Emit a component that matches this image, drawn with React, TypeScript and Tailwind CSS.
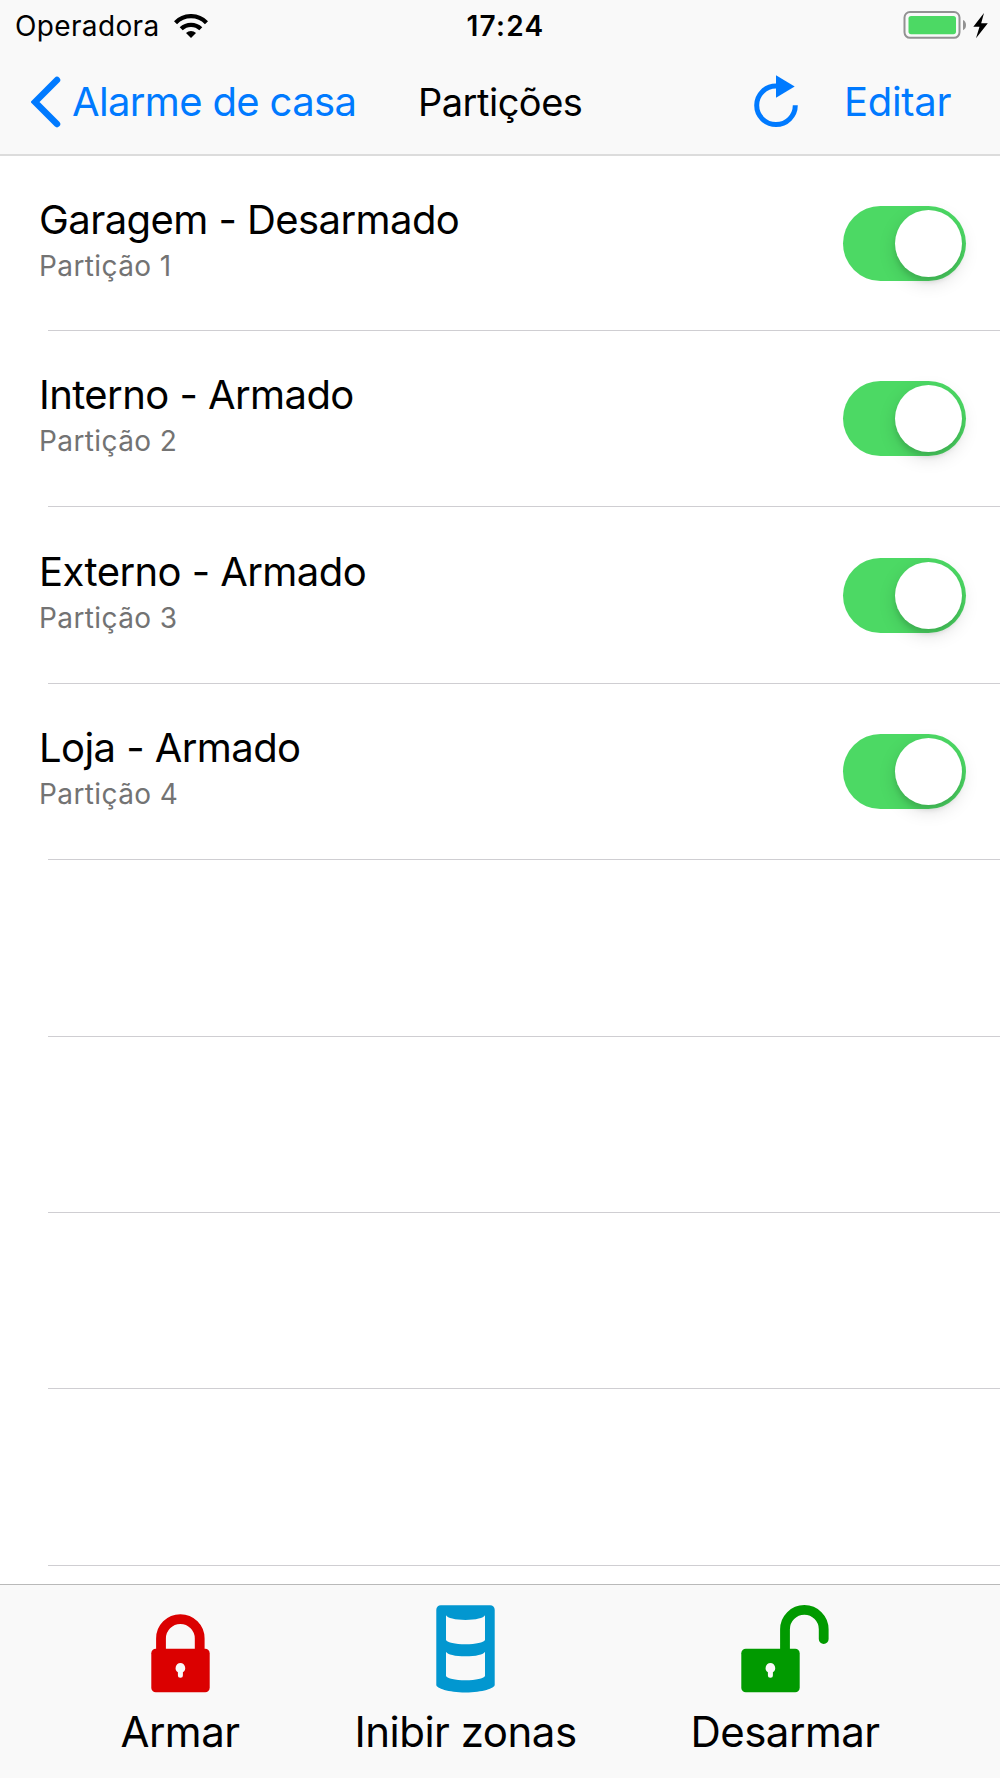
interface Partition {
  id: number;
  name: string;
  status: string;
}

const partitions: Partition[] = [
  { id: 1, name: "Garagem", status: "Desarmado" },
  { id: 2, name: "Interno", status: "Armado" },
  { id: 3, name: "Externo", status: "Armado" },
  { id: 4, name: "Loja", status: "Armado" },
];

function WifiIcon() {
  return (
    <svg width="34" height="24" viewBox="0 0 34 24" fill="none" stroke="#000">
      <path d="M1.500 8.700a21.600 21.600 0 0 1 31 0" strokeWidth="4.300" />
      <path d="M7.200 14.800a14 14 0 0 1 19.600 0" strokeWidth="4.300" />
      <path
        d="M17 24l-5-5.100c2.900-2.700 7.100-2.700 10 0z"
        fill="#000"
        stroke="none"
      />
    </svg>
  );
}

function BatteryIcon() {
  return (
    <svg width="86" height="28" viewBox="0 0 86 28" fill="none">
      <rect x="1.500" y="1" width="55" height="25.800" rx="5.500" stroke="#929292" strokeWidth="2" />
      <rect x="5.500" y="5" width="47.500" height="18.200" rx="2.600" fill="#4cd964" />
      <path d="M60 9c4 1.600 4 8.600 0 10.200z" fill="#929292" />
      <path d="M81 2L70.300 15.700h6.200L73 27.300 84.800 12.200h-6.600z" fill="#000" />
    </svg>
  );
}

function ReloadIcon() {
  return (
    <svg width="46" height="54" viewBox="0 0 46 54" fill="none">
      <path
        d="M23 11a19.300 19.300 0 1 0 19.300 19.300"
        stroke="#007aff"
        strokeWidth="5"
      />
      <path d="M23 0.300v22.400l18.700-11.200z" fill="#007aff" />
    </svg>
  );
}

const keyhole =
  "M29 48.700a5 5 0 0 1 2.500 9.200v3.100a2.500 2.500 0 0 1-5 0v-3.100a5 5 0 0 1 2.500-9.200z";

function LockIcon() {
  return (
    <svg width="59" height="88" viewBox="0 0 59 88" fill="none">
      <path d="M10 46V33.500a19.300 19.300 0 0 1 38.700 0V46" stroke="#db0000" strokeWidth="9.800" />
      <rect x="0.300" y="43.700" width="58.400" height="43.600" rx="4.500" fill="#db0000" />
      <path d={keyhole} transform="translate(0.4 9.300)" fill="#f9f9f9" />
    </svg>
  );
}

function ZonesIcon() {
  return (
    <svg width="59" height="88" viewBox="0 0 59 88" fill="none">
      <path
        d="M4.800 0.200h49.400a4.500 4.500 0 0 1 4.500 4.500V80c0 3-12 7.500-29.200 7.500S0.300 83 0.300 80V4.700A4.500 4.500 0 0 1 4.800 0.200z"
        fill="#0297d0"
      />
      <path
        d="M10 10.300c1.500 2.800 9 4.600 19.500 4.600S47.500 13.100 49 10.300V35c-1.500 2.600-9 4.200-19.500 4.200S11.500 37.600 10 35z"
        fill="#f9f9f9"
      />
      <path
        d="M10 46.700c1.500 2.800 9 4.600 19.500 4.600S47.500 49.500 49 46.700V71c-1.500 2.600-9 4.200-19.500 4.200S11.500 73.600 10 71z"
        fill="#f9f9f9"
      />
    </svg>
  );
}

function UnlockIcon() {
  return (
    <svg width="88" height="88" viewBox="0 0 88 88" fill="none">
      <path
        d="M44 46V24.300a19.300 19.300 0 0 1 38.700 0V34"
        stroke="#019a00"
        strokeWidth="9.800"
        strokeLinecap="round"
      />
      <rect x="0.300" y="43.700" width="58.400" height="43.600" rx="4.500" fill="#019a00" />
      <path d={keyhole} transform="translate(0.4 9.300)" fill="#f9f9f9" />
    </svg>
  );
}

function Toggle() {
  return (
    <button className="flex h-[75px] w-[123px] items-center justify-end rounded-full bg-[#4cd964] pr-1">
      <span className="size-[67px] rounded-full bg-white shadow-[0_6px_18px_rgba(0,0,0,0.13),0_5px_5px_rgba(0,0,0,0.1)]" />
    </button>
  );
}

function PartitionRow({ data }: { data: Partition }) {
  return (
    <li className="flex h-[176.4px] flex-col first:h-[175px]">
      <div className="flex flex-1 items-center justify-between pr-[34px] pl-[39px]">
        <div className="pb-[5px]">
          <h2 className="text-[40px] leading-[48px] tracking-[-0.57px] whitespace-nowrap text-black">
            {data.name} - {data.status}
          </h2>
          <p className="mt-0.5 text-[28px] leading-[40px] tracking-[0.4px] whitespace-nowrap text-[#737373]">
            Partição {data.id}
          </p>
        </div>
        <Toggle />
      </div>
      <div className="ml-12 h-px bg-[#cfced2]" />
    </li>
  );
}

export default function App() {
  return (
    <div className="flex h-[1778px] w-[1000px] flex-col overflow-hidden bg-white font-['Inter',sans-serif]">
      <header className="flex h-[156px] flex-col border-b-2 border-[#dcdcdc] bg-[#f9f9f9]">
        <div className="grid h-[51px] grid-cols-3 items-center pr-[11px] pl-[15px]">
          <div className="flex items-center gap-3.5">
            <span className="text-[28px] leading-none tracking-[0.35px]">
              Operadora
            </span>
            <WifiIcon />
          </div>
          <span className="pl-[7px] text-center text-[28px] leading-none font-semibold tracking-[1.3px]">
            17:24
          </span>
          <div className="flex justify-end pb-0.5">
            <BatteryIcon />
          </div>
        </div>
        <nav className="flex flex-1 items-center pb-[2px] pl-[31px] text-[40px] leading-[48px] whitespace-nowrap text-[#007aff]">
          <button className="flex items-center text-left tracking-[-0.65px]">
            <svg width="30" height="52" viewBox="0 0 30 52" fill="none">
              <path
                d="M26 4L4 26l22 22"
                stroke="#007aff"
                strokeWidth="6.500"
                strokeLinecap="round"
              />
            </svg>
            <span className="ml-[11px] w-[346px]">Alarme de casa</span>
          </button>
          <h1 className="w-[335px] text-[38px] tracking-[-0.5px] text-black">
            Partições
          </h1>
          <button>
            <ReloadIcon />
          </button>
          <button className="ml-[45px] tracking-[-0.3px]">Editar</button>
        </nav>
      </header>

      <ul className="flex-1 overflow-hidden">
        {partitions.map((item) => (
          <PartitionRow key={item.id} data={item} />
        ))}
        {[5, 6, 7, 8].map((id) => (
          <li key={id} className="flex h-[176.4px] items-end">
            <div className="ml-12 h-px flex-1 bg-[#cfced2]" />
          </li>
        ))}
      </ul>

      <footer className="flex h-[194px] border-t border-[#b9b9b9] bg-[#f9f9f9] pt-5 pl-5 text-[42px] leading-[50px] tracking-[-0.5px] whitespace-nowrap text-black">
        <button className="flex w-[320px] flex-col items-center gap-3.5">
          <LockIcon />
          Armar
        </button>
        <button className="flex w-[251px] flex-col items-center gap-3.5">
          <ZonesIcon />
          Inibir zonas
        </button>
        <button className="flex w-[388px] flex-col items-center gap-3.5">
          <UnlockIcon />
          Desarmar
        </button>
      </footer>
    </div>
  );
}
